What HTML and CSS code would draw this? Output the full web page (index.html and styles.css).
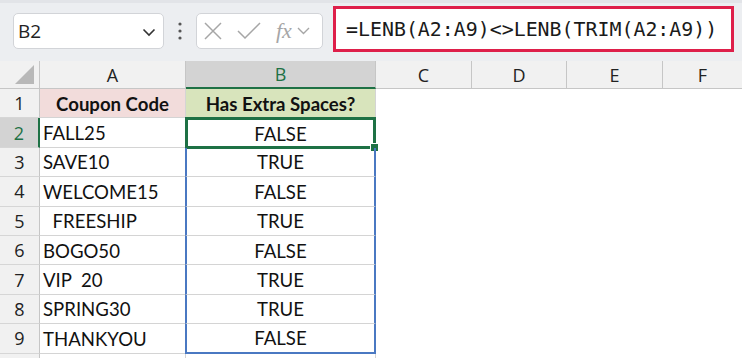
FILE: index.html
```html
<!DOCTYPE html>
<html lang="en">
<head>
  <meta charset="UTF-8">
  <title>Coupon codes</title>
  <link rel="stylesheet" href="styles.css">
</head>
<body>
  <div class="toolbar">
    <div class="namebox">
      <span>B2</span>
      <svg class="chev" width="14" height="9" viewBox="0 0 14 9"><path d="M1.5 1.5 L7 7 L12.5 1.5" fill="none" stroke="#333" stroke-width="1.6"/></svg>
    </div>
    <div class="dots">
      <svg width="6" height="18" viewBox="0 0 6 18"><circle cx="3" cy="2" r="1.6" fill="#555"/><circle cx="3" cy="9" r="1.6" fill="#555"/><circle cx="3" cy="16" r="1.6" fill="#555"/></svg>
    </div>
    <div class="fxbox">
      <svg width="20" height="20" viewBox="0 0 20 20"><path d="M2 2 L18 18 M18 2 L2 18" stroke="#a6a6a6" stroke-width="1.5" fill="none"/></svg>
      <svg width="26" height="20" viewBox="0 0 26 20"><path d="M2 10 L9 17 L24 2" stroke="#a6a6a6" stroke-width="1.5" fill="none"/></svg>
      <span class="fx">fx</span>
      <svg width="13" height="8" viewBox="0 0 13 8"><path d="M1 1 L6.5 6.5 L12 1" stroke="#a6a6a6" stroke-width="1.4" fill="none"/></svg>
    </div>
    <div class="formula">=LENB(A2:A9)&lt;&gt;LENB(TRIM(A2:A9))</div>
  </div>

  <div class="sheet">
    <div class="corner"><span class="tri"></span></div>
    <div class="colhead">A</div>
    <div class="colhead active">B</div>
    <div class="colhead">C</div>
    <div class="colhead">D</div>
    <div class="colhead">E</div>
    <div class="colhead last">F</div>

    <div class="rowhead">1</div>
    <div class="cell head-a">Coupon Code</div>
    <div class="cell head-b">Has Extra Spaces?</div>
    <div class="blank"></div>

    <div class="rowhead active">2</div>
    <div class="cell">FALL25</div>
    <div class="cell res selected">FALSE<span class="handle"></span></div>
    <div class="blank"></div>

    <div class="rowhead">3</div>
    <div class="cell">SAVE10</div>
    <div class="cell res range">TRUE</div>
    <div class="blank"></div>

    <div class="rowhead">4</div>
    <div class="cell">WELCOME15</div>
    <div class="cell res range">FALSE</div>
    <div class="blank"></div>

    <div class="rowhead">5</div>
    <div class="cell">  FREESHIP</div>
    <div class="cell res range">TRUE</div>
    <div class="blank"></div>

    <div class="rowhead">6</div>
    <div class="cell">BOGO50</div>
    <div class="cell res range">FALSE</div>
    <div class="blank"></div>

    <div class="rowhead">7</div>
    <div class="cell">VIP  20</div>
    <div class="cell res range">TRUE</div>
    <div class="blank"></div>

    <div class="rowhead">8</div>
    <div class="cell">SPRING30</div>
    <div class="cell res range">TRUE</div>
    <div class="blank"></div>

    <div class="rowhead">9</div>
    <div class="cell">THANKYOU</div>
    <div class="cell res range end">FALSE</div>
    <div class="blank"></div>

    <div class="rowhead"></div>
    <div class="cell"></div>
    <div class="cell"></div>
    <div class="blank"></div>
  </div>
</body>
</html>
```

FILE: styles.css
```css
body {
  margin: 0;
  width: 742px;
  height: 358px;
  overflow: hidden;
  background: #fff;
  font-family: Lato, "Liberation Sans", sans-serif;
}
.toolbar {
  height: 61px;
  box-sizing: border-box;
  background: #eceef1;
  border-top: 3px solid #e2e4e8;
  display: flex;
  align-items: flex-start;
  padding-left: 13px;
}
.namebox {
  margin-top: 10px;
  width: 151px;
  height: 36px;
  box-sizing: border-box;
  background: #fff;
  border: 1px solid #d2d4d8;
  border-radius: 5px;
  display: flex;
  align-items: center;
  justify-content: space-between;
  padding: 0 7px 0 4px;
  font-family: "Open Sans", sans-serif;
  font-size: 19px;
  color: #222;
}
.namebox .chev {
  margin-top: 2px;
}
.dots {
  width: 32px;
  display: flex;
  justify-content: center;
  margin-top: 19px;
}
.fxbox {
  margin-top: 10px;
  width: 127px;
  height: 36px;
  box-sizing: border-box;
  background: #fff;
  border: 1px solid #d2d4d8;
  border-radius: 5px;
  display: flex;
  align-items: center;
  gap: 13px;
  padding-left: 6px;
}
.fxbox .fx {
  font-family: "Liberation Serif", serif;
  font-style: italic;
  font-size: 22px;
  color: #a6a6a6;
  margin-left: 1px;
  margin-right: -8px;
}
.formula {
  margin-left: 10px;
  margin-top: 3px;
  width: 401px;
  height: 46px;
  box-sizing: border-box;
  border: 3px solid #de1f4a;
  background: #fff;
  font-family: "DejaVu Sans Mono", monospace;
  font-size: 19.9px;
  color: #1a1a1a;
  display: flex;
  align-items: center;
  padding-left: 10px;
}
.sheet {
  display: grid;
  grid-template-columns: 40px 146px 190px 96px 95px 96px 1fr;
  grid-template-rows: 28px repeat(9, 29.4px) 30px;
  font-size: 18.6px;
  color: #111;
}
.corner {
  background: #f1f1f1;
  border-right: 1px solid #c6c6c6;
  border-bottom: 1px solid #c6c6c6;
  position: relative;
}
.tri {
  position: absolute;
  right: 5px;
  bottom: 4px;
  width: 0;
  height: 0;
  border-left: 19px solid transparent;
  border-bottom: 19px solid #b8b8b8;
}
.colhead {
  background: #f1f1f1;
  border-right: 1px solid #c6c6c6;
  border-bottom: 1px solid #c6c6c6;
  display: flex;
  align-items: center;
  justify-content: center;
  font-family: "Open Sans", sans-serif;
  font-size: 18px;
  color: #222;
}
.colhead.active {
  background: #d3d3d3;
  color: #1e7145;
  border-bottom: 2px solid #1e7145;
}
.colhead.last {
  border-right: none;
}
.rowhead {
  background: #f1f1f1;
  border-right: 1px solid #c6c6c6;
  border-bottom: 1px solid #d6d6d6;
  display: flex;
  align-items: center;
  justify-content: center;
  font-family: "Open Sans", sans-serif;
  font-size: 18px;
  color: #222;
}
.rowhead.active {
  background: #d3d3d3;
  color: #1e7145;
  border-right: 2px solid #1e7145;
}
.cell {
  border-right: 1px solid #d4d4d4;
  border-bottom: 1px solid #d4d4d4;
  display: flex;
  align-items: center;
  padding-left: 3px;
  padding-top: 1px;
  white-space: pre;
  position: relative;
}
.head-a {
  background: #f2dcdb;
  font-weight: bold;
  justify-content: center;
  padding-left: 0;
}
.head-b {
  background: #d8e4bc;
  font-weight: bold;
  justify-content: center;
  padding-left: 0;
}
.res {
  justify-content: center;
  padding-left: 0;
}
.range {
  border-left: 2px solid #4a78c2;
  border-right: 2px solid #4a78c2;
  margin-left: -1px;
}
.range.end {
  border-bottom: 2px solid #4a78c2;
}
.selected {
  border: 3px solid #1e7145;
  margin: -1px 0 -1px -1px;
}
.handle {
  position: absolute;
  right: -6px;
  bottom: -6px;
  width: 7px;
  height: 7px;
  background: #1e7145;
  border: 1px solid #fff;
}
.blank {
  grid-column: 4 / 8;
}
```
